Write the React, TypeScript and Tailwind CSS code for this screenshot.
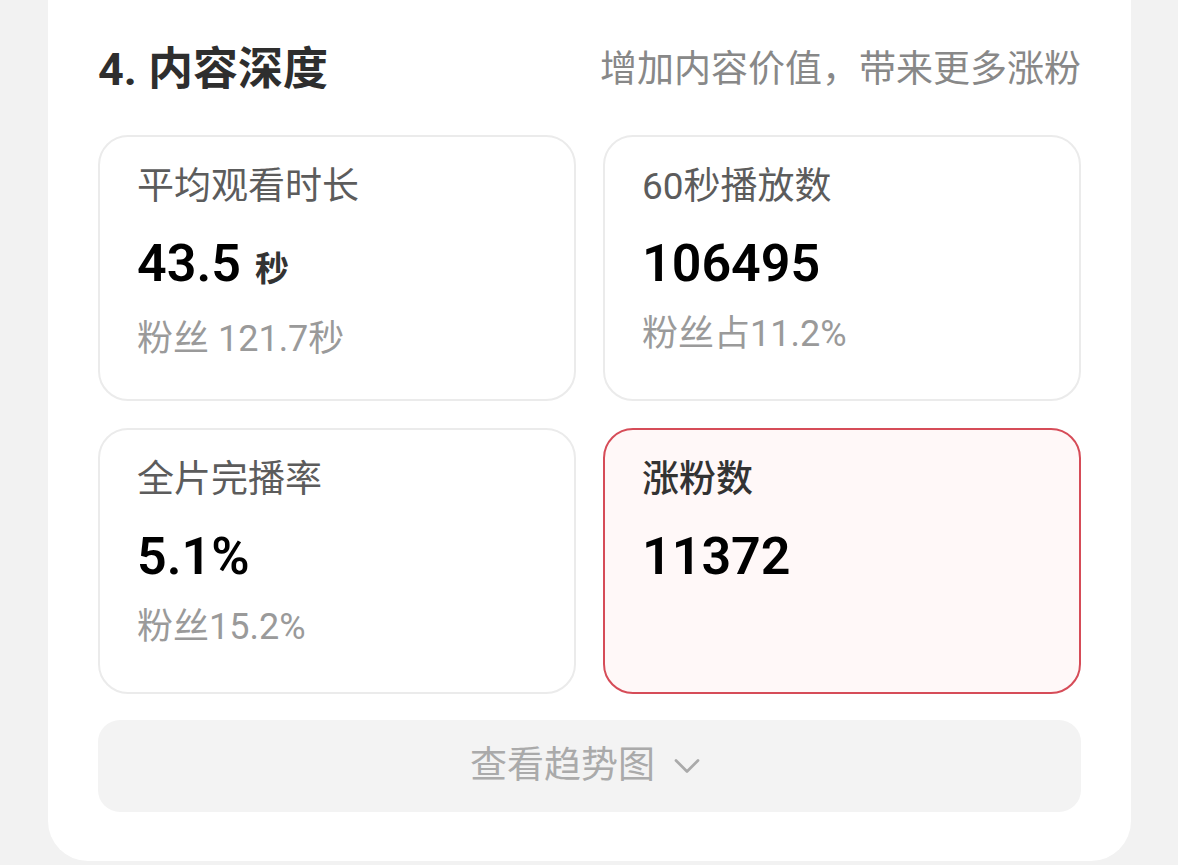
import { ChevronDown } from "lucide-react";

type Metric = {
  label: string;
  value: string;
  unit?: string;
  sub?: string;
  highlight?: boolean;
};

const metrics: Metric[] = [
  { label: "平均观看时长", value: "43.5", unit: "秒", sub: "粉丝 121.7秒" },
  { label: "60秒播放数", value: "106495", sub: "粉丝占11.2%" },
  { label: "全片完播率", value: "5.1%", sub: "粉丝15.2%" },
  { label: "涨粉数", value: "11372", highlight: true },
];

function MetricCard({ label, value, unit, sub, highlight }: Metric) {
  return (
    <div
      className={
        highlight
          ? "h-[266px] rounded-[30px] border-2 border-[#d64c58] bg-[#fff8f8] pl-[37px] pt-[28px]"
          : "h-[266px] rounded-[30px] border-2 border-[#ebebeb] bg-white pl-[37px] pt-[28px]"
      }
    >
      {/* Label */}
      <div
        className={
          highlight
            ? "text-[37px] leading-[44px] font-medium text-[#333]"
            : "text-[37px] leading-[44px] text-[#5c5c5c]"
        }
      >
        {label}
      </div>

      {/* Value */}
      <div className="mt-[25px] flex items-baseline text-[52px] leading-[60px] font-semibold text-black">
        <span>{value}</span>
        {unit && (
          <span className="ml-[14px] text-[34px] font-semibold text-[#333]">{unit}</span>
        )}
      </div>

      {/* Fans comparison */}
      {sub && (
        <div className="mt-[18px] text-[36px] leading-[44px] text-[#9a9a9a]">{sub}</div>
      )}
    </div>
  );
}

export default function App() {
  return (
    <div
      className="h-[865px] overflow-hidden bg-[#f2f2f2] px-[48px]"
      style={{ fontFamily: 'Roboto, "Noto Sans CJK SC", sans-serif' }}
    >
      <div className="rounded-b-[40px] bg-white px-[50px] pb-[49px] pt-[42px] w-[1083px]">
        {/* Header row */}
        <div className="flex items-center justify-between">
          <h2 className="text-[45px] leading-[56px] font-bold text-[#2e2e2e]">4. 内容深度</h2>
          <span className="text-[37px] leading-[56px] text-[#888]">增加内容价值，带来更多涨粉</span>
        </div>

        {/* Metric grid */}
        <div className="mt-[37px] grid grid-cols-2 gap-x-[27px] gap-y-[27px]">
          {metrics.map((m) => (
            <MetricCard key={m.label} {...m} />
          ))}
        </div>

        {/* Trend toggle */}
        <button
          type="button"
          className="mt-[26px] flex h-[92px] w-full items-center justify-center gap-[10px] rounded-[22px] bg-[#f3f3f3] text-[37px] text-[#aaa]"
        >
          查看趋势图
          <ChevronDown size={44} strokeWidth={1.5} color="#aaa" />
        </button>
      </div>
    </div>
  );
}
